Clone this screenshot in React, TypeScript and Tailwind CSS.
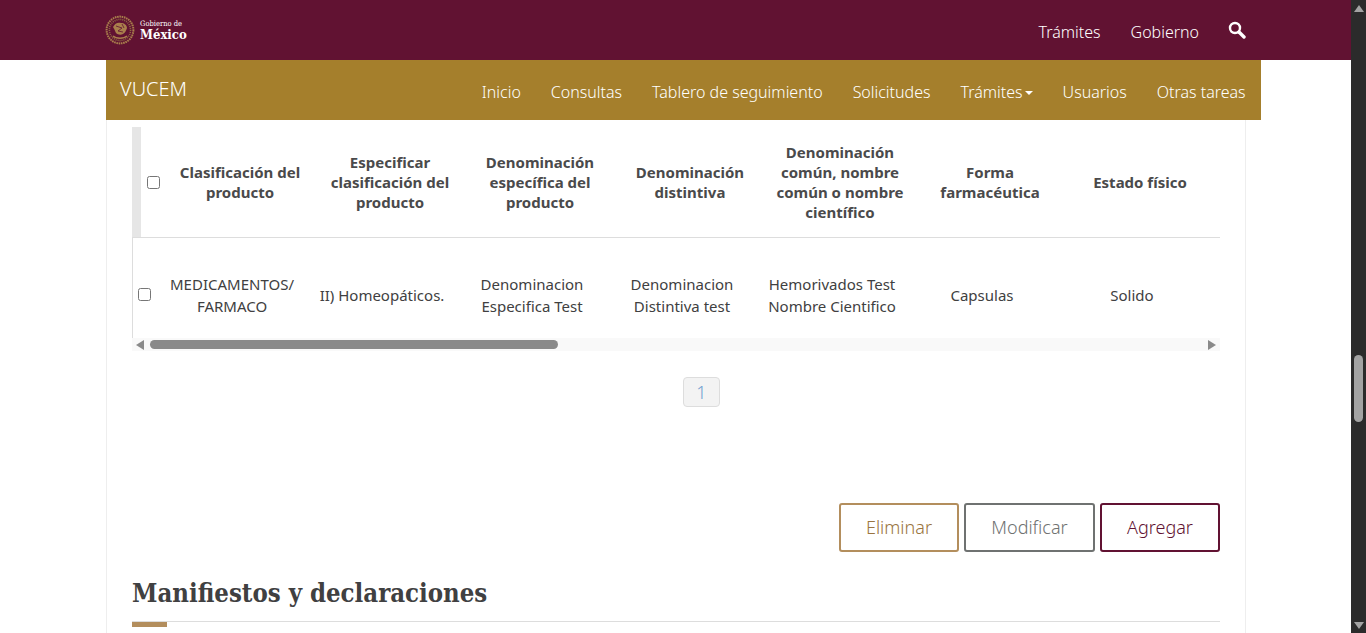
import React from 'react';

const navItems = ['Inicio', 'Consultas', 'Tablero de seguimiento', 'Solicitudes', 'Trámites', 'Usuarios', 'Otras tareas'];

const headers = [
  ['Clasificación del', 'producto'],
  ['Especificar', 'clasificación del', 'producto'],
  ['Denominación', 'específica del', 'producto'],
  ['Denominación', 'distintiva'],
  ['Denominación', 'común, nombre', 'común o nombre', 'científico'],
  ['Forma', 'farmacéutica'],
  ['Estado físico'],
];

const cells = [
  ['MEDICAMENTOS/', 'FARMACO'],
  ['II) Homeopáticos.'],
  ['Denominacion', 'Especifica Test'],
  ['Denominacion', 'Distintiva test'],
  ['Hemorivados Test', 'Nombre Cientifico'],
  ['Capsulas'],
  ['Solido'],
];

const Seal = () => (
  <svg width="30" height="30" viewBox="0 0 30 30" fill="none">
    <circle cx="15" cy="15" r="13.4" stroke="#a97f4c" strokeWidth="2" strokeDasharray="1.6 0.7" />
    <circle cx="15" cy="15" r="10.6" stroke="#8f6b42" strokeWidth="1.6" strokeDasharray="1 1" />
    <path d="M8 12c2-4 5-5 8-4 3 0 6 2 6 5-1 3-2 5-4 6-2 1-5 1-7-1-1-2-1-3-3-6z" fill="#a97f4c" />
    <path d="M11 11l6 2-4 3 5 1M17 9l2 4" stroke="#611232" strokeWidth="0.8" />
    <path d="M8 21c3 3 11 3 14 0" stroke="#a97f4c" strokeWidth="1.5" />
  </svg>
);

const Search = () => (
  <svg width="18" height="18" viewBox="0 0 18 18" fill="none" stroke="#fff">
    <circle cx="7" cy="7" r="5" strokeWidth="2.4" />
    <path d="M11 11 16 16" strokeWidth="3.4" strokeLinecap="round" />
  </svg>
);

const ActionButton = ({ label, className }: { label: string; className: string }) => (
  <button className={`h-[49px] rounded-[3px] border-2 bg-white text-[18px] font-light ${className}`}>{label}</button>
);

const App = () => {
  return (
    <div className="flex h-[633px] overflow-hidden bg-white font-['Noto_Sans','Open_Sans',sans-serif] text-[#404041]">
      <div className="w-[1351px] shrink-0">
        <header className="flex h-[60px] items-center bg-[#611232] pl-[105px] pr-[105px] text-white">
          <Seal />
          <div className="ml-[5px] flex flex-col font-['DejaVu_Serif',serif] font-stretch-condensed">
            <span className="text-[7.5px] leading-[8px]">Gobierno de</span>
            <span className="text-[13px] font-bold leading-[13px]">México</span>
          </div>
          <div className="ml-auto mt-[3px] flex items-center text-[16px] font-light">
            <span>Trámites</span>
            <span className="ml-[30px]">Gobierno</span>
            <span className="ml-[29px] -mt-[3px]"><Search /></span>
          </div>
        </header>

        <nav className="ml-[106px] flex h-[60px] w-[1155px] bg-[#a57f2c] pl-[14px] pr-[15.4px] text-white">
          <span className="mt-[15px] text-[20px] font-light leading-[28px]">VUCEM</span>
          <ul className="ml-auto mt-[20px] flex h-[24px] gap-[30px] text-[16px] font-light leading-[24px]">
            {navItems.map((item) => (
              <li key={item} className="flex items-center">
                {item}
                {item === 'Trámites' && (
                  <span className="ml-[2px] mt-[2px] border-x-[4px] border-t-[4px] border-x-transparent border-t-white" />
                )}
              </li>
            ))}
          </ul>
        </nav>

        <main className="ml-[106px] h-[513px] w-[1140px] border-x border-[#eeeeee] px-[25px] pt-[7px]">
          <div className="flex h-[111px] w-[1088px] overflow-hidden border-b border-[#dddddd]">
            <div className="w-[9px] shrink-0 bg-[#e6e6e6]" />
            <div className="flex w-[24px] shrink-0 items-center justify-center">
              <input type="checkbox" className="size-[13px]" />
            </div>
            {headers.map((lines) => (
              <div key={lines.join()} className="flex w-[150px] shrink-0 flex-col items-center justify-center text-[15px] font-bold leading-[20px] text-[#4a4a4b]">
                {lines.map((line) => <span key={line}>{line}</span>)}
              </div>
            ))}
          </div>

          <div className="flex h-[100px] w-[1088px] overflow-hidden border-l border-[#dddddd]">
            <div className="flex w-[24px] shrink-0 items-center justify-center pr-[2px] pt-[12px]">
              <input type="checkbox" className="size-[13px]" />
            </div>
            {cells.map((lines) => (
              <div key={lines.join()} className="flex w-[150px] shrink-0 flex-col items-center justify-center pt-[14px] text-[15px] leading-[22px]">
                {lines.map((line) => <span key={line}>{line}</span>)}
              </div>
            ))}
          </div>

          <div className="flex h-[13px] w-[1088px] items-center bg-[#f9f9f9] px-[4px]">
            <span className="border-y-[5px] border-r-[8px] border-y-transparent border-r-[#8a8a8a]" />
            <div className="ml-[6px] h-[9px] w-[408px] rounded-full bg-[#8a8a8a]" />
            <span className="ml-auto border-y-[5px] border-l-[8px] border-y-transparent border-l-[#8a8a8a]" />
          </div>

          <div className="mt-[26px] flex w-[1088px]">
            <span className="ml-[551px] flex h-[30px] w-[37px] items-center justify-center rounded-[4px] border border-[#dddddd] bg-[#f3f3f3] text-[18px] font-light text-[#6f9fd0]">1</span>
          </div>

          <div className="mt-[96px] flex w-[1088px] justify-end gap-[5px]">
            <ActionButton label="Eliminar" className="w-[120px] border-[#b38e5d] text-[#9a7440]" />
            <ActionButton label="Modificar" className="w-[131px] border-[#6f7271] text-[#6f7271]" />
            <ActionButton label="Agregar" className="w-[120px] border-[#611232] text-[#611232]" />
          </div>

          <h2 className="mt-[25px] font-['DejaVu_Serif',serif] text-[25.5px] font-bold font-stretch-condensed leading-[32px] text-[#404041]">Manifiestos y declaraciones</h2>
          <div className="mt-[12px] h-px w-[1088px] bg-[#dddddd]" />
          <div className="h-[5px] w-[35px] bg-[#b38e5d]" />
        </main>
      </div>

      <aside className="flex w-[15px] shrink-0 flex-col items-center bg-[#2b2b2b] pb-[4px] pt-[5px]">
        <span className="border-x-[5px] border-b-[7px] border-x-transparent border-b-[#a3a3a3]" />
        <div className="mt-[343px] h-[67px] w-[9px] rounded-full bg-[#a3a3a3]" />
        <span className="mt-auto border-x-[5px] border-t-[7px] border-x-transparent border-t-[#a3a3a3]" />
      </aside>
    </div>
  );
};

export default App;
